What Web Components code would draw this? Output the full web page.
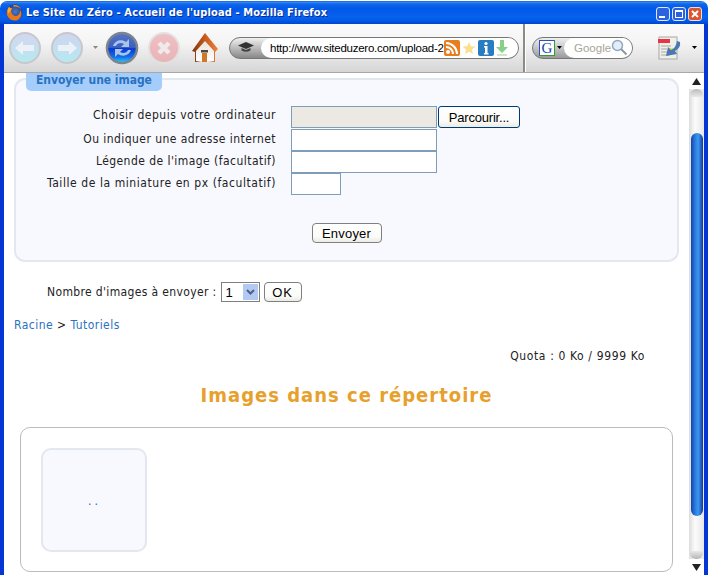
<!DOCTYPE html>
<html lang="fr">
<head>
<meta charset="utf-8">
<title>Le Site du Zéro</title>
<style>
html, body { margin: 0; padding: 0; background: #fff; overflow: hidden; }
body { font-family: "DejaVu Sans", sans-serif; }
</style>
</head>
<body>
<xp-window caption="Le Site du Zéro - Accueil de l'upload - Mozilla Firefox">
    <fx-toolbar slot="toolbar"></fx-toolbar>
    <fx-scrollpane>
        <upload-panel legend="Envoyer une image">
            <upload-row label="Choisir depuis votre ordinateur" kind="file" style="--ls:.5px"></upload-row>
            <upload-row label="Ou indiquer une adresse internet" style="--ls:.44px"></upload-row>
            <upload-row label="Légende de l'image (facultatif)" style="--ls:.45px"></upload-row>
            <upload-row label="Taille de la miniature en px (facultatif)" kind="small" style="--ls:.57px"></upload-row>
        </upload-panel>
        <count-form></count-form>
        <crumb-path></crumb-path>
        <quota-line>Quota : 0 Ko / 9999 Ko</quota-line>
        <section-title>Images dans ce répertoire</section-title>
        <image-box>
            <image-tile>..</image-tile>
        </image-box>
    </fx-scrollpane>
</xp-window>

<script>
function shadow(el, html) {
    el.attachShadow({ mode: "open" }).innerHTML = html;
}

class XpWindow extends HTMLElement {
    connectedCallback() {
        shadow(this, `
        <style>
            :host { display: flex; flex-direction: column; width: 708px; height: 575px; box-sizing: border-box; padding-top: 1px; }
            .title { height: 23px; flex: none; display: flex; align-items: center; padding: 0 6px 0 6px; box-sizing: border-box;
                border-radius: 7px 7px 0 0;
                background: linear-gradient(#0a52d8 0, #3c8cf5 1px, #0f66ea 3px, #0058e8 8px, #0862ee 16px, #0258e6 20px, #0046cc 23px); }
            .caption { margin-left: 3px; color: #fff; font: bold 11px "DejaVu Sans Condensed", "DejaVu Sans", sans-serif; letter-spacing: .13px; text-shadow: 1px 1px 0 #0a2a90; white-space: nowrap; flex: 1; }
            .btns { display: flex; gap: 2px; margin-top: 2px; }
            .btns svg { display: block; }
            .body { flex: 1; min-height: 0; display: flex; flex-direction: column; border-left: 4px solid #0536d4; border-right: 4px solid #0536d4; }
        </style>
        <div class="title">
            <svg width="17" height="17" viewBox="0 0 16 16">
                <defs><radialGradient id="g" cx=".55" cy=".45" r=".6"><stop offset="0" stop-color="#4a78c8"/><stop offset="1" stop-color="#14307c"/></radialGradient></defs>
                <circle cx="8" cy="8" r="7.5" fill="url(#g)"/>
                <path d="M3 2.5 C4 4 5 4 6.5 3.6 C5 5 4.5 6 5 7.5 C5.5 10 8 12 10.5 11 C12.5 10 13.5 8 13 5.5 C15.5 8 15 13 11 15 C7 16.5 2.5 14.5 1 10.5 C.3 7.5 1 4.5 3 2.5Z" fill="#e8781a"/>
                <path d="M2 9 C1 6 2 4 3 2.5 C3.5 4 4.5 4.5 5.5 4.5 C4 6 4 7.5 2 9Z" fill="#f6b02c"/>
                <path d="M7 1 C10 .5 13 2 14.5 5 C12.5 3 10 2 7 2.5Z" fill="#f09020"/>
            </svg>
            <span class="caption">${this.getAttribute("caption")}</span>
            <div class="btns">
                <svg width="14" height="14" viewBox="0 0 14 14"><rect x=".5" y=".5" width="13" height="13" rx="2.5" fill="#2a62e0" stroke="#dfe8fb"/><rect x="3" y="9" width="6" height="2" fill="#fff"/></svg>
                <svg width="14" height="14" viewBox="0 0 14 14"><rect x=".5" y=".5" width="13" height="13" rx="2.5" fill="#2a62e0" stroke="#dfe8fb"/><rect x="3.5" y="3.5" width="7" height="7" fill="none" stroke="#fff"/><rect x="3" y="3" width="8" height="2" fill="#fff"/></svg>
                <svg width="14" height="14" viewBox="0 0 14 14"><rect x=".5" y=".5" width="13" height="13" rx="2.5" fill="#d9552e" stroke="#f2dcd2"/><path d="M4 4 L10 10 M10 4 L4 10" stroke="#fff" stroke-width="2"/></svg>
            </div>
        </div>
        <div class="body"><slot name="toolbar"></slot><slot></slot></div>`);
    }
}

class FxToolbar extends HTMLElement {
    connectedCallback() {
        const roundBtn = (id, c1, c2, ring, path) => `
            <svg width="34" height="34" viewBox="0 0 34 34">
                <defs><linearGradient id="${id}" x1="0" y1="0" x2="0" y2="1"><stop offset="0" stop-color="${c1}"/><stop offset="1" stop-color="${c2}"/></linearGradient></defs>
                <circle cx="17" cy="17" r="15" fill="url(#${id})" stroke="${ring}" stroke-width="2"/>
                ${path}
            </svg>`;
        shadow(this, `
        <style>
            :host { display: flex; align-items: center; flex: none; height: 49px; box-sizing: border-box; padding-bottom: 1px;
                background: linear-gradient(#fafafa, #f4f4f4 40%, #d6d6d6); border-bottom: 1px solid #a8a8a8; }
            svg { display: block; flex: none; }
            span > svg { display: block; }
            .back { margin-left: 4px; }
            .fwd { margin-left: 8px; }
            .drop { margin-left: 9px; }
            .reload { margin-left: 7px; }
            .stop { margin-left: 8px; }
            .home { margin-left: 10px; }
            .url { margin-left: 10px; width: 290px; height: 22px; box-sizing: border-box; flex: none; display: flex; border-radius: 11px; border: 1px solid #777; background: linear-gradient(#f0f0f0, #888); }
            .cap { width: 31px; display: flex; align-items: center; justify-content: center; }
            .field { flex: 1; min-width: 0; background: #fff; border-radius: 10px; display: flex; align-items: center; padding-left: 9px; overflow: hidden; }
            .addr { font: 11.5px "Liberation Sans", sans-serif; letter-spacing: -.25px; color: #000; white-space: nowrap; width: 174px; flex: none; }
            .icons { display: flex; align-items: center; gap: 2px; }
            .sep { margin-left: 4px; width: 1px; height: 48px; background: #8c8c84; border-right: 1px solid #fff; border-left: 1px solid #8c8c84; }
            .search { margin-left: 6px; width: 101px; height: 22px; box-sizing: border-box; flex: none; display: flex; border-radius: 11px; border: 1px solid #777; background: linear-gradient(#f0f0f0, #999); }
            .engine { width: 31px; display: flex; align-items: center; padding-left: 7px; gap: 2px; box-sizing: border-box; }
            .g { width: 16px; height: 16px; flex: none; margin-left: -1px; box-sizing: border-box; background: #fff; border: 1px solid; border-color: #2a50c8 #2aa030 #2aa030 #2a50c8; color: #1a3fb0; font: 15px/14px "Liberation Serif", serif; text-align: center; }
            .sfield { flex: 1; background: #fff; border-radius: 10px; display: flex; align-items: center; padding-left: 10px; font: 11.5px "Liberation Sans", sans-serif; color: #a8a498; }
            .notes { margin-left: 24px; }
            .tail { margin-left: 11px; }
        </style>
        <span class="back">${roundBtn("a", "#d4d6f0", "#b4eaf0", "#c8c8cc", '<path d="M7 17 L15 10 V14 H26 V20 H15 V24Z" fill="#eef0f8"/>')}</span>
        <span class="fwd">${roundBtn("b", "#d0d4f0", "#b4eaf0", "#c8c8cc", '<path d="M27 17 L19 10 V14 H8 V20 H19 V24Z" fill="#eef0f8"/>')}</span>
        <svg class="drop" width="5" height="4"><path d="M0 0H5L2.5 3Z" fill="#888"/></svg>
        <span class="reload">
            <svg width="34" height="34" viewBox="0 0 34 34">
                <defs><linearGradient id="c" x1="0" y1="0" x2="0" y2="1"><stop offset="0" stop-color="#5a74c4"/><stop offset=".48" stop-color="#3a60c0"/><stop offset=".52" stop-color="#0a38d0"/><stop offset=".8" stop-color="#1470e8"/><stop offset="1" stop-color="#28d8f4"/></linearGradient></defs>
                <circle cx="17" cy="17" r="15" fill="url(#c)" stroke="#7c8490" stroke-width="2.5"/>
                <path d="M8 15 C10 9 17 8 21 11 L24 8 V16 H16 L19 13 C16 11 12 12 11 15Z" fill="#a8c4ec"/>
                <path d="M26 19 C24 25 17 26 13 23 L10 26 V18 H18 L15 21 C18 23 22 22 23 19Z" fill="#a8c4ec"/>
            </svg>
        </span>
        <span class="stop">${roundBtn("d", "#f0c0c4", "#e8b4b8", "#e4e0e0", '<path d="M12 12 L22 22 M22 12 L12 22" stroke="#f0eaea" stroke-width="4.5"/>')}</span>
        <svg class="home" width="28" height="32" viewBox="0 0 28 32">
            <defs>
                <linearGradient id="r" x1="0" y1="0" x2="1" y2="0"><stop offset="0" stop-color="#7c3410"/><stop offset=".5" stop-color="#c85a1c"/><stop offset="1" stop-color="#e88440"/></linearGradient>
                <linearGradient id="w" x1="0" y1="0" x2="0" y2="1"><stop offset="0" stop-color="#e8e4dc"/><stop offset="1" stop-color="#fff"/></linearGradient>
            </defs>
            <path d="M14 1 L27 17 L24 20 L24 30 H4 V20 L1 19Z" fill="url(#r)"/>
            <path d="M14 9 L23 19 V29 Q14 31 5 29 V19Z" fill="url(#w)"/>
            <rect x="10" y="18" width="7" height="2.5" fill="#504840"/>
            <rect x="11" y="21" width="5" height="9" fill="#d07828"/>
        </svg>
        <div class="url">
            <div class="cap">
                <svg width="16" height="11" viewBox="0 0 16 11"><path d="M8 0 L16 3.5 L8 7 L0 3.5Z" fill="#333"/><path d="M3.5 6 V8.5 Q8 11 12.5 8.5 V6 L8 8Z" fill="#444"/></svg>
            </div>
            <div class="field">
                <span class="addr">http://www.siteduzero.com/upload-2</span>
                <span class="icons">
                    <svg width="16" height="16" viewBox="0 0 16 16"><rect width="16" height="16" rx="2" fill="#e87c1e"/><circle cx="4" cy="12" r="2" fill="#fff"/><path d="M2 7 A7 7 0 0 1 9 14 M2 3 A11 11 0 0 1 13 14" fill="none" stroke="#fff" stroke-width="2"/></svg>
                    <svg width="14" height="14" viewBox="0 0 15 15"><path d="M7.5 1 L9.5 5.5 L14.5 6 L10.7 9.2 L11.8 14 L7.5 11.5 L3.2 14 L4.3 9.2 L.5 6 L5.5 5.5Z" fill="#f8e090"/></svg>
                    <svg width="16" height="16" viewBox="0 0 16 16"><rect width="16" height="16" rx="2" fill="#2a7cc0"/><circle cx="8" cy="3.5" r="1.6" fill="#fff"/><path d="M6 6 H9.5 V13 H10.5 V14.5 H6 V13 H7 V7.5 H6Z" fill="#fff"/></svg>
                    <svg width="12" height="16" viewBox="0 0 12 16"><path d="M4 0 H8 V7 H12 L6 13 L0 7 H4Z" fill="#88d088"/><rect x="1" y="14" width="10" height="2" fill="#c8e8c8"/></svg>
                </span>
            </div>
        </div>
        <div class="sep"></div>
        <div class="search">
            <div class="engine"><span class="g">G</span><svg width="5" height="4"><path d="M0 0H5L2.5 3Z" fill="#000"/></svg></div>
            <div class="sfield">Google
                <svg width="17" height="17" viewBox="0 0 17 17"><circle cx="6.5" cy="6.5" r="5" fill="#e4eef8" stroke="#90a8c0" stroke-width="1.5"/><path d="M10 10 L15.5 15.5" stroke="#8898a8" stroke-width="2"/></svg>
            </div>
        </div>
        <svg class="notes" width="24" height="24" viewBox="0 0 24 24">
            <rect x="2" y="1" width="18" height="22" fill="#f0f0ea" stroke="#a8a8a0"/>
            <rect x="1" y="3" width="12" height="4" fill="#e8344a"/>
            <path d="M4 10 H14 M4 13 H10 M4 16 H10 M4 19 H12" stroke="#a8a8a0"/>
            <rect x="11" y="12" width="6" height="6" fill="#e8e050"/>
            <path d="M23 6 Q24 12 18 15 L20 18 L9 20 L11 11 L14 14 Q19 12 20 5Z" fill="#4a78b4"/>
        </svg>
        <svg class="tail" width="5" height="4"><path d="M0 0H5L2.5 3Z" fill="#000"/></svg>`);
    }
}

class FxScrollpane extends HTMLElement {
    connectedCallback() {
        shadow(this, `
        <style>
            :host { display: flex; flex: 1; min-height: 0; background: #fff; }
            .page { flex: 1; min-width: 0; overflow: hidden; padding: 5px 10px 0 10px; font: 12px "DejaVu Sans Condensed", "DejaVu Sans", sans-serif; letter-spacing: .47px; color: #222; }
            .bar { width: 15px; flex: none; display: flex; flex-direction: column; background: linear-gradient(90deg, #dcdcdc, #fbfbfb 40%, #e8e8e8); }
            .end { height: 16px; flex: none; display: flex; align-items: center; justify-content: center; background: #fff; }
            .cap { height: 8px; flex: none; border-radius: 6px 6px 0 0; background: linear-gradient(#bbb, #e8e8e8); margin: 0 1px; }
            .cap.low { border-radius: 0 0 6px 6px; background: linear-gradient(#e8e8e8, #b4b4b4); }
            .gap1 { height: 44px; flex: none; }
            .gap2 { flex: 1; }
            .thumb { height: 383px; flex: none; margin: 0 1px 0 2px; border-radius: 7px; background: linear-gradient(90deg, #1842a8, #2a7ce0 35%, #3c98f0 60%, #10389c); }
        </style>
        <div class="page"><slot></slot></div>
        <div class="bar">
            <div class="end"><svg width="9" height="7"><path d="M0 7H9L4.5 0Z" fill="#222"/></svg></div>
            <div class="gap1"><div class="cap"></div></div>
            <div class="thumb"></div>
            <div class="gap2"></div>
            <div class="cap low"></div>
            <div class="end"><svg width="9" height="7"><path d="M0 0H9L4.5 7Z" fill="#222"/></svg></div>
        </div>`);
    }
}

class UploadPanel extends HTMLElement {
    connectedCallback() {
        shadow(this, `
        <style>
            :host { display: block; height: 184px; width: 665px; box-sizing: border-box; background: #f8f9fe; border: 2px solid #e3e7ef; border-radius: 11px; }
            .legend { margin: -8px 0 0 10px; width: 136px; height: 19px; box-sizing: border-box; padding-left: 10px; background: #a5cdfb; border-radius: 0 0 5px 5px; color: #2a72c0; font: bold 12px/17px "DejaVu Sans Condensed", "DejaVu Sans", sans-serif; letter-spacing: -.05px; overflow: hidden; white-space: nowrap; }
            .rows { margin-top: 15px; display: flex; flex-direction: column; }
            .send { margin-top: 28px; display: flex; justify-content: center; }
        </style>
        <div class="legend">${this.getAttribute("legend")}</div>
        <div class="rows"><slot></slot></div>
        <div class="send"><form-button style="--w:70px;--h:20px;--r:4px">Envoyer</form-button></div>`);
    }
}

class UploadRow extends HTMLElement {
    connectedCallback() {
        const kind = this.getAttribute("kind");
        shadow(this, `
        <style>
            :host { display: grid; grid-template-columns: 260px auto 1fr; column-gap: 15px; align-items: start; height: 22px; letter-spacing: var(--ls, .5px); }
            :host([kind="file"]) { height: 23px; }
            label { text-align: right; white-space: nowrap; line-height: 20px; }
            :host([kind="file"]) label { line-height: 18px; }
            .box { display: block; box-sizing: border-box; width: 146px; height: 22px; border: 1px solid #7f9db9; background: #fff; }
            .file { background: #ebe9e2; }
            .small { width: 50px; }
            .side { margin-left: -14px; }
        </style>
        <label>${this.getAttribute("label")}</label>
        <span class="box ${kind || ""}"></span>
        ${kind === "file" ? '<div class="side"><form-button style="--w:82px;--h:22px;--b:#003c74;--ls:-.2px">Parcourir...</form-button></div>' : ""}`);
    }
}

class FormButton extends HTMLElement {
    connectedCallback() {
        shadow(this, `
        <style>
            :host { display: inline-flex; align-items: center; justify-content: center; box-sizing: border-box; width: var(--w); height: var(--h); border: 1px solid var(--b, #7f7f7f); border-radius: var(--r, 3px); background: linear-gradient(#fff, #fbfbf8 70%, #ecebe4); font: 13px "Liberation Sans", sans-serif; letter-spacing: var(--ls, .2px); color: #000; }
        </style>
        <slot></slot>`);
    }
}

class CountForm extends HTMLElement {
    connectedCallback() {
        shadow(this, `
        <style>
            :host { display: flex; align-items: center; height: 20px; margin-top: 20px; padding-left: 33px; white-space: nowrap; letter-spacing: .36px; }
            .select { margin-left: 4px; width: 39px; height: 20px; box-sizing: border-box; border: 1px solid #7f7f7f; background: #fff; display: flex; align-items: center; justify-content: space-between; padding: 1px 1px 1px 4px; font: 13px "Liberation Sans", sans-serif; letter-spacing: 0; color: #000; }
            .arrow { width: 15px; height: 16px; background: #b4c8f4; display: flex; align-items: center; justify-content: center; }
            form-button { margin-left: 4px; }
        </style>
        <span>Nombre d'images à envoyer :</span>
        <div class="select">1<span class="arrow"><svg width="9" height="6" viewBox="0 0 9 6"><path d="M1 1 L4.5 4.5 L8 1" fill="none" stroke="#4d6185" stroke-width="2"/></svg></span></div>
        <form-button style="--w:38px;--h:20px;--ls:1px;--r:4px">OK</form-button>`);
    }
}

class CrumbPath extends HTMLElement {
    connectedCallback() {
        shadow(this, `
        <style>
            :host { display: block; margin-top: 16px; line-height: 15px; }
            a { color: #2a72c0; text-decoration: none; }
        </style>
        <a href="#">Racine</a> &gt; <a href="#">Tutoriels</a>`);
    }
}

class QuotaLine extends HTMLElement {
    connectedCallback() {
        shadow(this, `
        <style>
            :host { display: block; margin-top: 16px; line-height: 15px; text-align: right; padding-right: 34px; letter-spacing: .62px; }
        </style>
        <slot></slot>`);
    }
}

class SectionTitle extends HTMLElement {
    connectedCallback() {
        shadow(this, `
        <style>
            :host { display: block; margin-top: 16px; text-align: center; font: bold 20px/30px "DejaVu Sans Condensed", "DejaVu Sans", sans-serif; letter-spacing: 1px; color: #e8a02c; width: 665px; }
        </style>
        <slot></slot>`);
    }
}

class ImageBox extends HTMLElement {
    connectedCallback() {
        shadow(this, `
        <style>
            :host { display: block; margin: 17px 0 0 6px; width: 653px; height: 145px; box-sizing: border-box; padding: 20px; border: 1px solid #bbb; border-radius: 10px; background: #fff; }
        </style>
        <slot></slot>`);
    }
}

class ImageTile extends HTMLElement {
    connectedCallback() {
        shadow(this, `
        <style>
            :host { display: flex; align-items: center; justify-content: center; width: 106px; height: 104px; box-sizing: border-box; padding: 1px 0 0 1px; background: #f8f9fe; border: 2px solid #e3e7ef; border-radius: 10px; color: #1a6ac8; letter-spacing: 3px; }
        </style>
        <slot></slot>`);
    }
}

customElements.define("xp-window", XpWindow);
customElements.define("fx-toolbar", FxToolbar);
customElements.define("fx-scrollpane", FxScrollpane);
customElements.define("upload-panel", UploadPanel);
customElements.define("upload-row", UploadRow);
customElements.define("form-button", FormButton);
customElements.define("count-form", CountForm);
customElements.define("crumb-path", CrumbPath);
customElements.define("quota-line", QuotaLine);
customElements.define("section-title", SectionTitle);
customElements.define("image-box", ImageBox);
customElements.define("image-tile", ImageTile);
</script>
</body>
</html>
